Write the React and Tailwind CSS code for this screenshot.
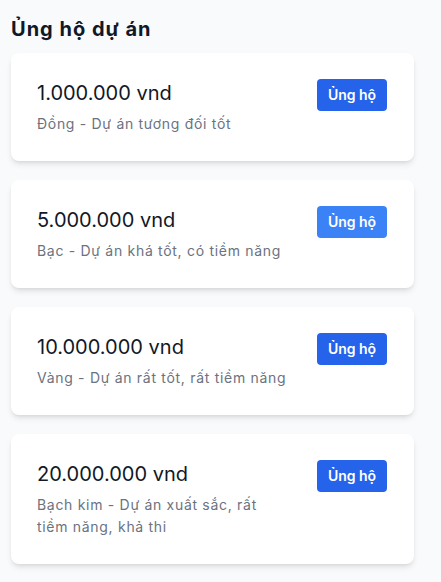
import React from "react";

const tiers = [
  { amount: "1.000.000 vnd", desc: "Đồng - Dự án tương đối tốt", hover: false },
  { amount: "5.000.000 vnd", desc: "Bạc - Dự án khá tốt, có tiềm năng", hover: true },
  { amount: "10.000.000 vnd", desc: "Vàng - Dự án rất tốt, rất tiềm năng", hover: false },
  { amount: "20.000.000 vnd", desc: "Bạch kim - Dự án xuất sắc, rất tiềm năng, khả thi", hover: false },
];

export default function App() {
  return (
    <div
      className="min-h-[582px] bg-[#f9fafb] pt-[15px] pl-[11px]"
      style={{ fontFamily: "Inter, 'Noto Sans', sans-serif" }}
    >
      <div className="w-[403px]">
        <h1 className="text-xl leading-7 font-bold tracking-[1px] text-[#111827] mb-[10px]">Ủng hộ dự án</h1>
        <div className="flex flex-col gap-[19px]">
          {tiers.map((t) => (
            <div
              key={t.amount}
              className="bg-white rounded-lg shadow-md pl-[26px] pr-[27px] pt-[26px] pb-[26px] flex items-start justify-between"
            >
              <div className="w-[252px]">
                <div className="text-xl leading-7 text-[#111827]">{t.amount}</div>
                <div className="mt-[6px] text-sm leading-[22px] tracking-[0.7px] text-[#6b7280]">{t.desc}</div>
              </div>
              <button
                className={
                  "h-8 w-[70px] rounded text-sm font-semibold text-white " +
                  (t.hover ? "bg-[#3b82f6]" : "bg-[#2563eb]")
                }
              >
                Ủng hộ
              </button>
            </div>
          ))}
        </div>
      </div>
    </div>
  );
}
